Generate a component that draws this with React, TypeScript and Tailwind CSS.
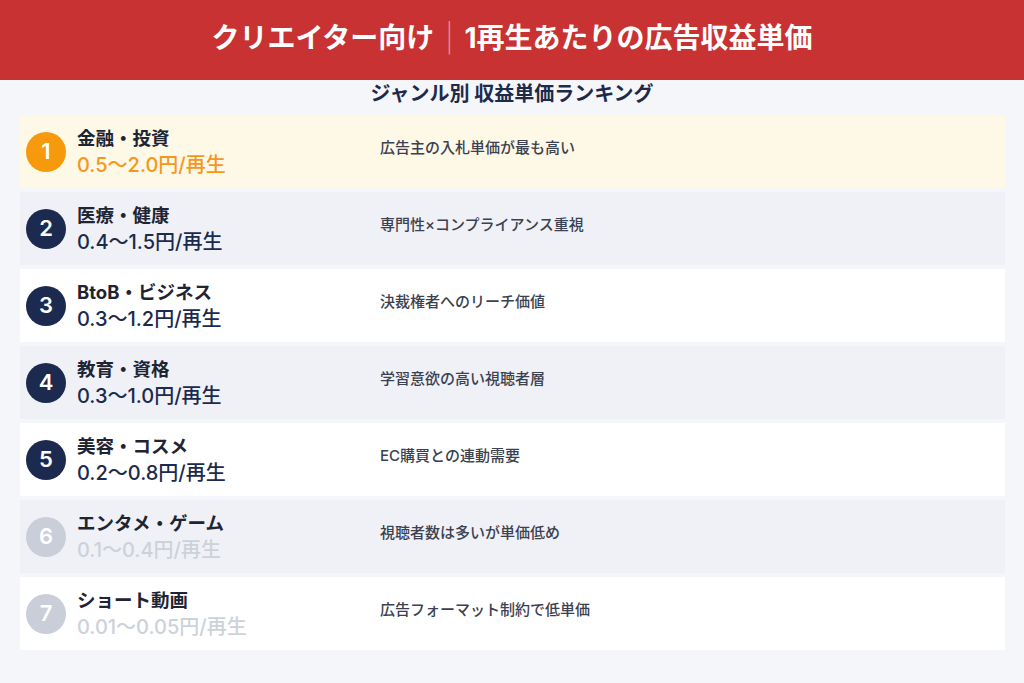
const rows = [
  { rank: 1, name: "金融・投資", price: "0.5〜2.0円/再生", note: "広告主の入札単価が最も高い", tone: "top" },
  { rank: 2, name: "医療・健康", price: "0.4〜1.5円/再生", note: "専門性×コンプライアンス重視", tone: "mid" },
  { rank: 3, name: "BtoB・ビジネス", price: "0.3〜1.2円/再生", note: "決裁権者へのリーチ価値", tone: "mid" },
  { rank: 4, name: "教育・資格", price: "0.3〜1.0円/再生", note: "学習意欲の高い視聴者層", tone: "mid" },
  { rank: 5, name: "美容・コスメ", price: "0.2〜0.8円/再生", note: "EC購買との連動需要", tone: "mid" },
  { rank: 6, name: "エンタメ・ゲーム", price: "0.1〜0.4円/再生", note: "視聴者数は多いが単価低め", tone: "low" },
  { rank: 7, name: "ショート動画", price: "0.01〜0.05円/再生", note: "広告フォーマット制約で低単価", tone: "low" },
]

const rowBg = ["bg-[#fef8e6]", "bg-[#eff1f7]", "bg-white", "bg-[#eff1f7]", "bg-white", "bg-[#eff1f7]", "bg-white"]

export default function App() {
  return (
    <div
      className="h-[683px] w-[1024px] bg-[#f5f6fa]"
      style={{ fontFamily: 'Inter, "Noto Sans CJK JP", sans-serif' }}
    >
      <header className="flex h-20 items-center justify-center bg-[#c83232] pb-1">
        <h1 className="text-[28px] font-bold text-white">
          クリエイター向け<span className="mx-[11px] font-extralight text-white/50">|</span>1再生あたりの広告収益単価
        </h1>
      </header>

      <h2 className="text-center text-[20px] leading-[28px] font-bold text-[#1e2a4a]">
        ジャンル別 収益単価ランキング
      </h2>

      <div className="mt-[7px] flex flex-col gap-[4px] pl-5 pr-[19px]">
        {rows.map((r, i) => (
          <div key={r.rank} className={`flex h-[73px] items-center ${rowBg[i]}`}>
            <div className="flex w-[360px] items-center gap-[11px] pl-[6px]">
              <div
                className={`flex h-10 w-10 items-center justify-center rounded-full text-[22px] font-semibold text-white ${
                  r.tone === "top" ? "bg-[#f7990c]" : r.tone === "mid" ? "bg-[#1b2a4e]" : "bg-[#c9ced9]"
                }`}
              >
                {r.rank}
              </div>
              <div className="flex flex-col">
                <div className="text-[18.5px] leading-[26px] font-bold text-[#1f2433]">{r.name}</div>
                <div
                  className={`text-[20px] leading-[28px] font-medium ${
                    r.tone === "top" ? "text-[#f5971c]" : r.tone === "mid" ? "text-[#1b2a4e]" : "text-[#cdd1da]"
                  }`}
                >
                  {r.price}
                </div>
              </div>
            </div>
            <div className="pb-[6px] text-[15px] font-medium text-[#3b4150]">{r.note}</div>
          </div>
        ))}
      </div>
    </div>
  )
}
